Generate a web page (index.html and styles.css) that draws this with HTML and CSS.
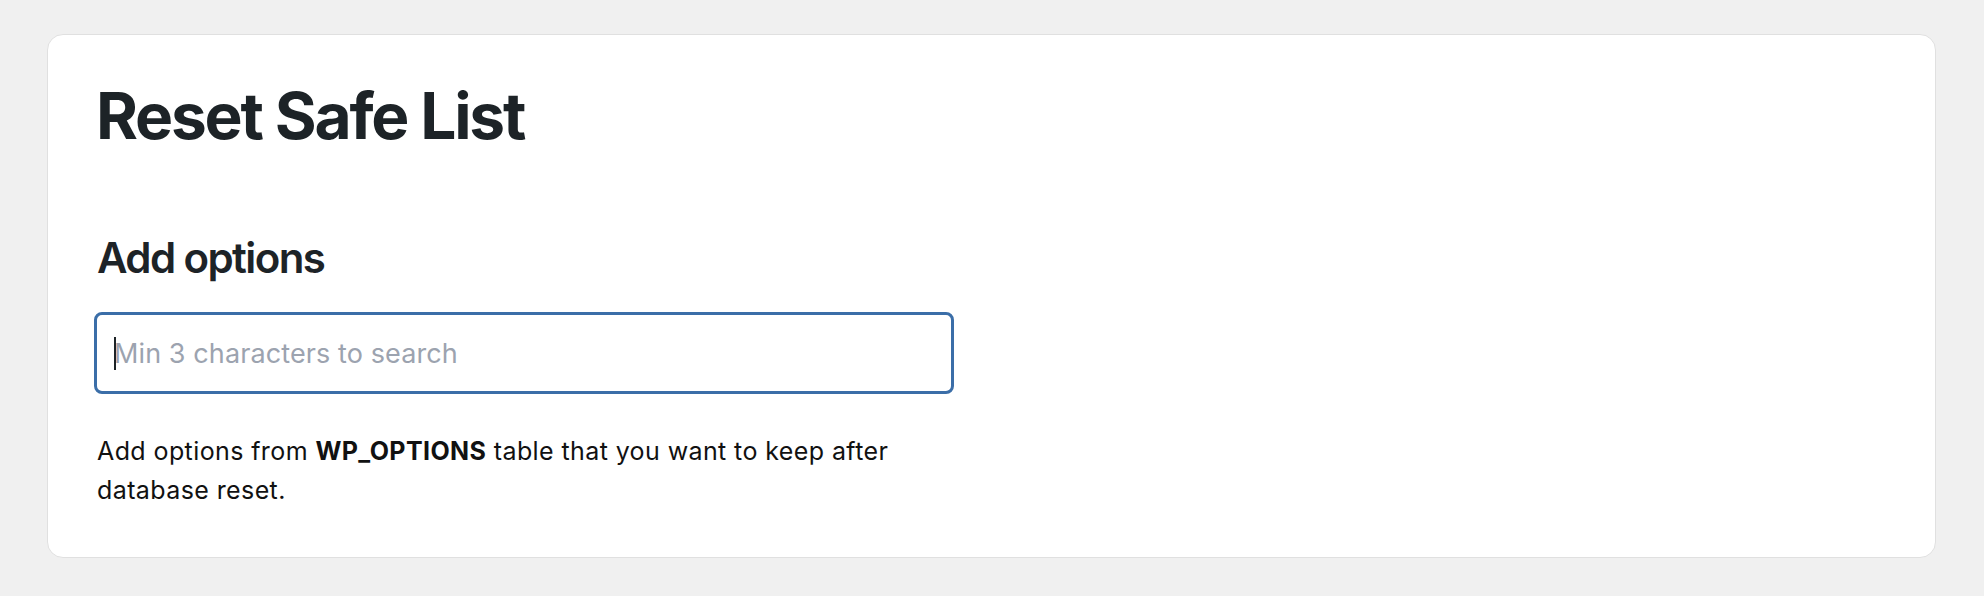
FILE: index.html
```html
<!DOCTYPE html>
<html lang="en">
<head>
<meta charset="utf-8">
<title>Reset Safe List</title>
<link rel="stylesheet" href="styles.css">
</head>
<body>
<main class="card">
  <h1 class="title">Reset Safe List</h1>
  <section class="section">
    <h2 class="section-title">Add options</h2>
    <div class="field">
      <span class="caret"></span>
      <input class="search" type="text" placeholder="Min 3 characters to search">
    </div>
    <p class="help">Add options from <strong>WP_OPTIONS</strong> table that you want to keep after database reset.</p>
  </section>
</main>
</body>
</html>
```
FILE: styles.css
```css
* { box-sizing: border-box; }
html, body { margin: 0; padding: 0; }
body {
  background: #f0f0f0;
  font-family: Inter, "Noto Sans", "Liberation Sans", sans-serif;
  padding: 34px 48px 38px 47px;
}
.card {
  background: #fff;
  border: 1px solid #e0e0e0;
  border-radius: 16px;
  padding: 43px 48px 43px 46px;
  height: 524px;
}
.title {
  margin: 0;
  padding-left: 2px;
  font-size: 64px;
  line-height: 1.2;
  font-weight: 700;
  color: #1d2327;
  letter-spacing: -2.2px;
}
.section {
  margin-top: 78px;
  width: 860px;
}
.section-title {
  margin: 0;
  padding-left: 3px;
  font-size: 42px;
  line-height: 1.2;
  font-weight: 600;
  color: #1d2327;
  letter-spacing: -1.6px;
}
.field {
  position: relative;
  margin-top: 29px;
}
.search {
  display: block;
  width: 860px;
  height: 82px;
  border: 3px solid #3b6ea8;
  border-radius: 8px;
  padding: 0 17px;
  font-family: inherit;
  font-size: 27px;
  letter-spacing: 0.1px;
  color: #1d2327;
  outline: none;
  background: #fff;
}
.search::placeholder { color: #9ca3af; }
.caret {
  position: absolute;
  left: 20px;
  top: 25px;
  width: 2px;
  height: 33px;
  background: #1d2327;
}
.help {
  margin: 38px 0 0;
  padding-left: 3px;
  font-size: 25px;
  line-height: 39px;
  letter-spacing: 0.4px;
  color: #111;
}
.help strong { font-weight: 700; }
```
